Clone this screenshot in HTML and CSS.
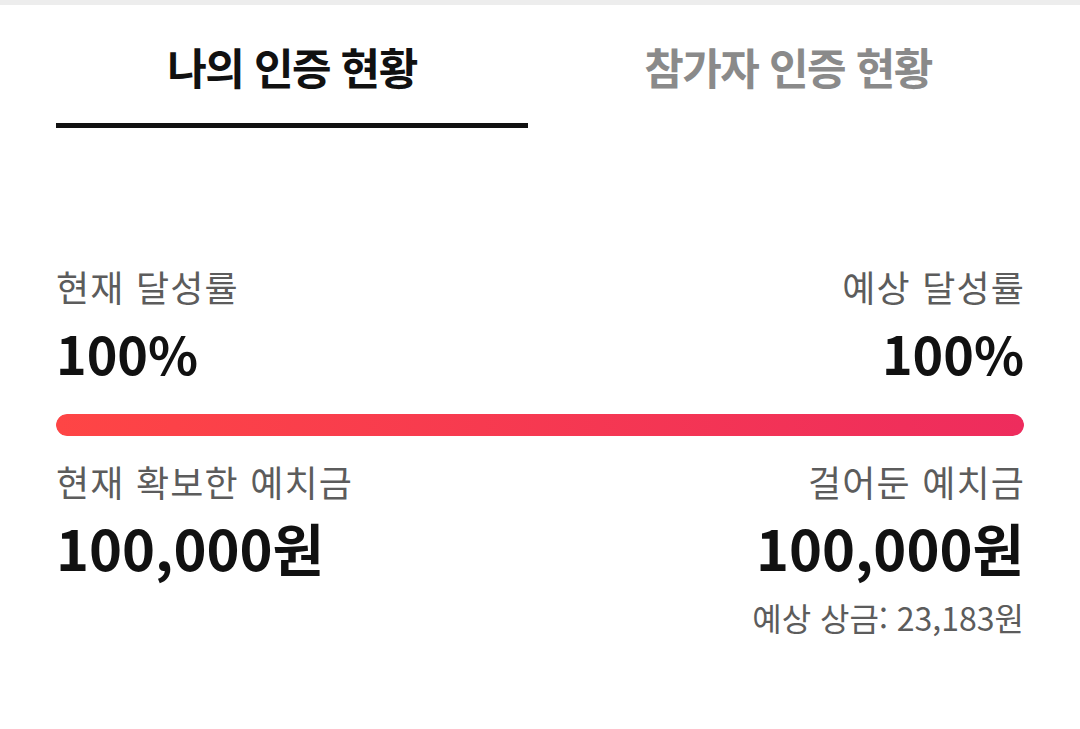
FILE: index.html
```html
<!DOCTYPE html>
<html lang="ko">
<head>
<meta charset="utf-8">
<link rel="stylesheet" href="styles.css">
</head>
<body>
<div class="topband"></div>
<nav class="tabs">
  <div class="tab active">나의 인증 현황</div>
  <div class="tab">참가자 인증 현황</div>
</nav>
<main class="content">
  <div class="row">
    <div class="col">
      <div class="label">현재 달성률</div>
      <div class="value">100%</div>
    </div>
    <div class="col right">
      <div class="label">예상 달성률</div>
      <div class="value">100%</div>
    </div>
  </div>
  <div class="bar"><div class="fill" style="width:100%"></div></div>
  <div class="row">
    <div class="col">
      <div class="label">현재 확보한 예치금</div>
      <div class="value money">100,000원</div>
    </div>
    <div class="col right">
      <div class="label">걸어둔 예치금</div>
      <div class="value money">100,000원</div>
      <div class="prize">예상 상금: 23,183원</div>
    </div>
  </div>
</main>
</body>
</html>
```
FILE: styles.css
```css
* { box-sizing: border-box; }
html, body { margin: 0; padding: 0; background: #fff; }
body {
  width: 1080px;
  height: 729px;
  overflow: hidden;
  font-family: "Noto Sans CJK KR", sans-serif;
  color: #111;
}
.topband { height: 5px; background: #ededed; }
.tabs {
  display: grid;
  grid-template-columns: 1fr 1fr;
  column-gap: 24px;
  padding: 0 56px;
}
.tab {
  font-weight: 700;
  font-size: 43px;
  line-height: 48px;
  letter-spacing: -1.5px;
  text-align: center;
  color: #8a8a8a;
  padding-top: 37px;
  padding-bottom: 33px;
  border-bottom: 5px solid transparent;
}
.tab.active { color: #111; border-bottom-color: #111; }
.content { padding: 0 56px; margin-top: 138px; }
.row { display: flex; justify-content: space-between; }
.col { display: flex; flex-direction: column; }
.col.right { align-items: flex-end; }
.label {
  font-size: 36px;
  line-height: 41px;
  letter-spacing: 1.2px;
  color: #5c5c5c;
}
.col.right .label { margin-right: -1.2px; }
.value {
  font-weight: 700;
  font-size: 52px;
  line-height: 63px;
  margin-top: 14px;
  margin-bottom: 2px;
  color: #111;
}
.bar {
  height: 22px;
  border-radius: 11px;
  background: #f1f1f1;
  margin-top: 28px;
  margin-bottom: 25px;
  overflow: hidden;
}
.fill {
  height: 100%;
  border-radius: 11px;
  background: linear-gradient(90deg, #fe4545, #ee2c5d);
}
.money { font-size: 56px; line-height: 65px; margin-top: 12px; margin-bottom: 0; }
.prize {
  font-size: 32px;
  line-height: 38px;
  color: #5c5c5c;
  margin-top: 19px;
}
```
